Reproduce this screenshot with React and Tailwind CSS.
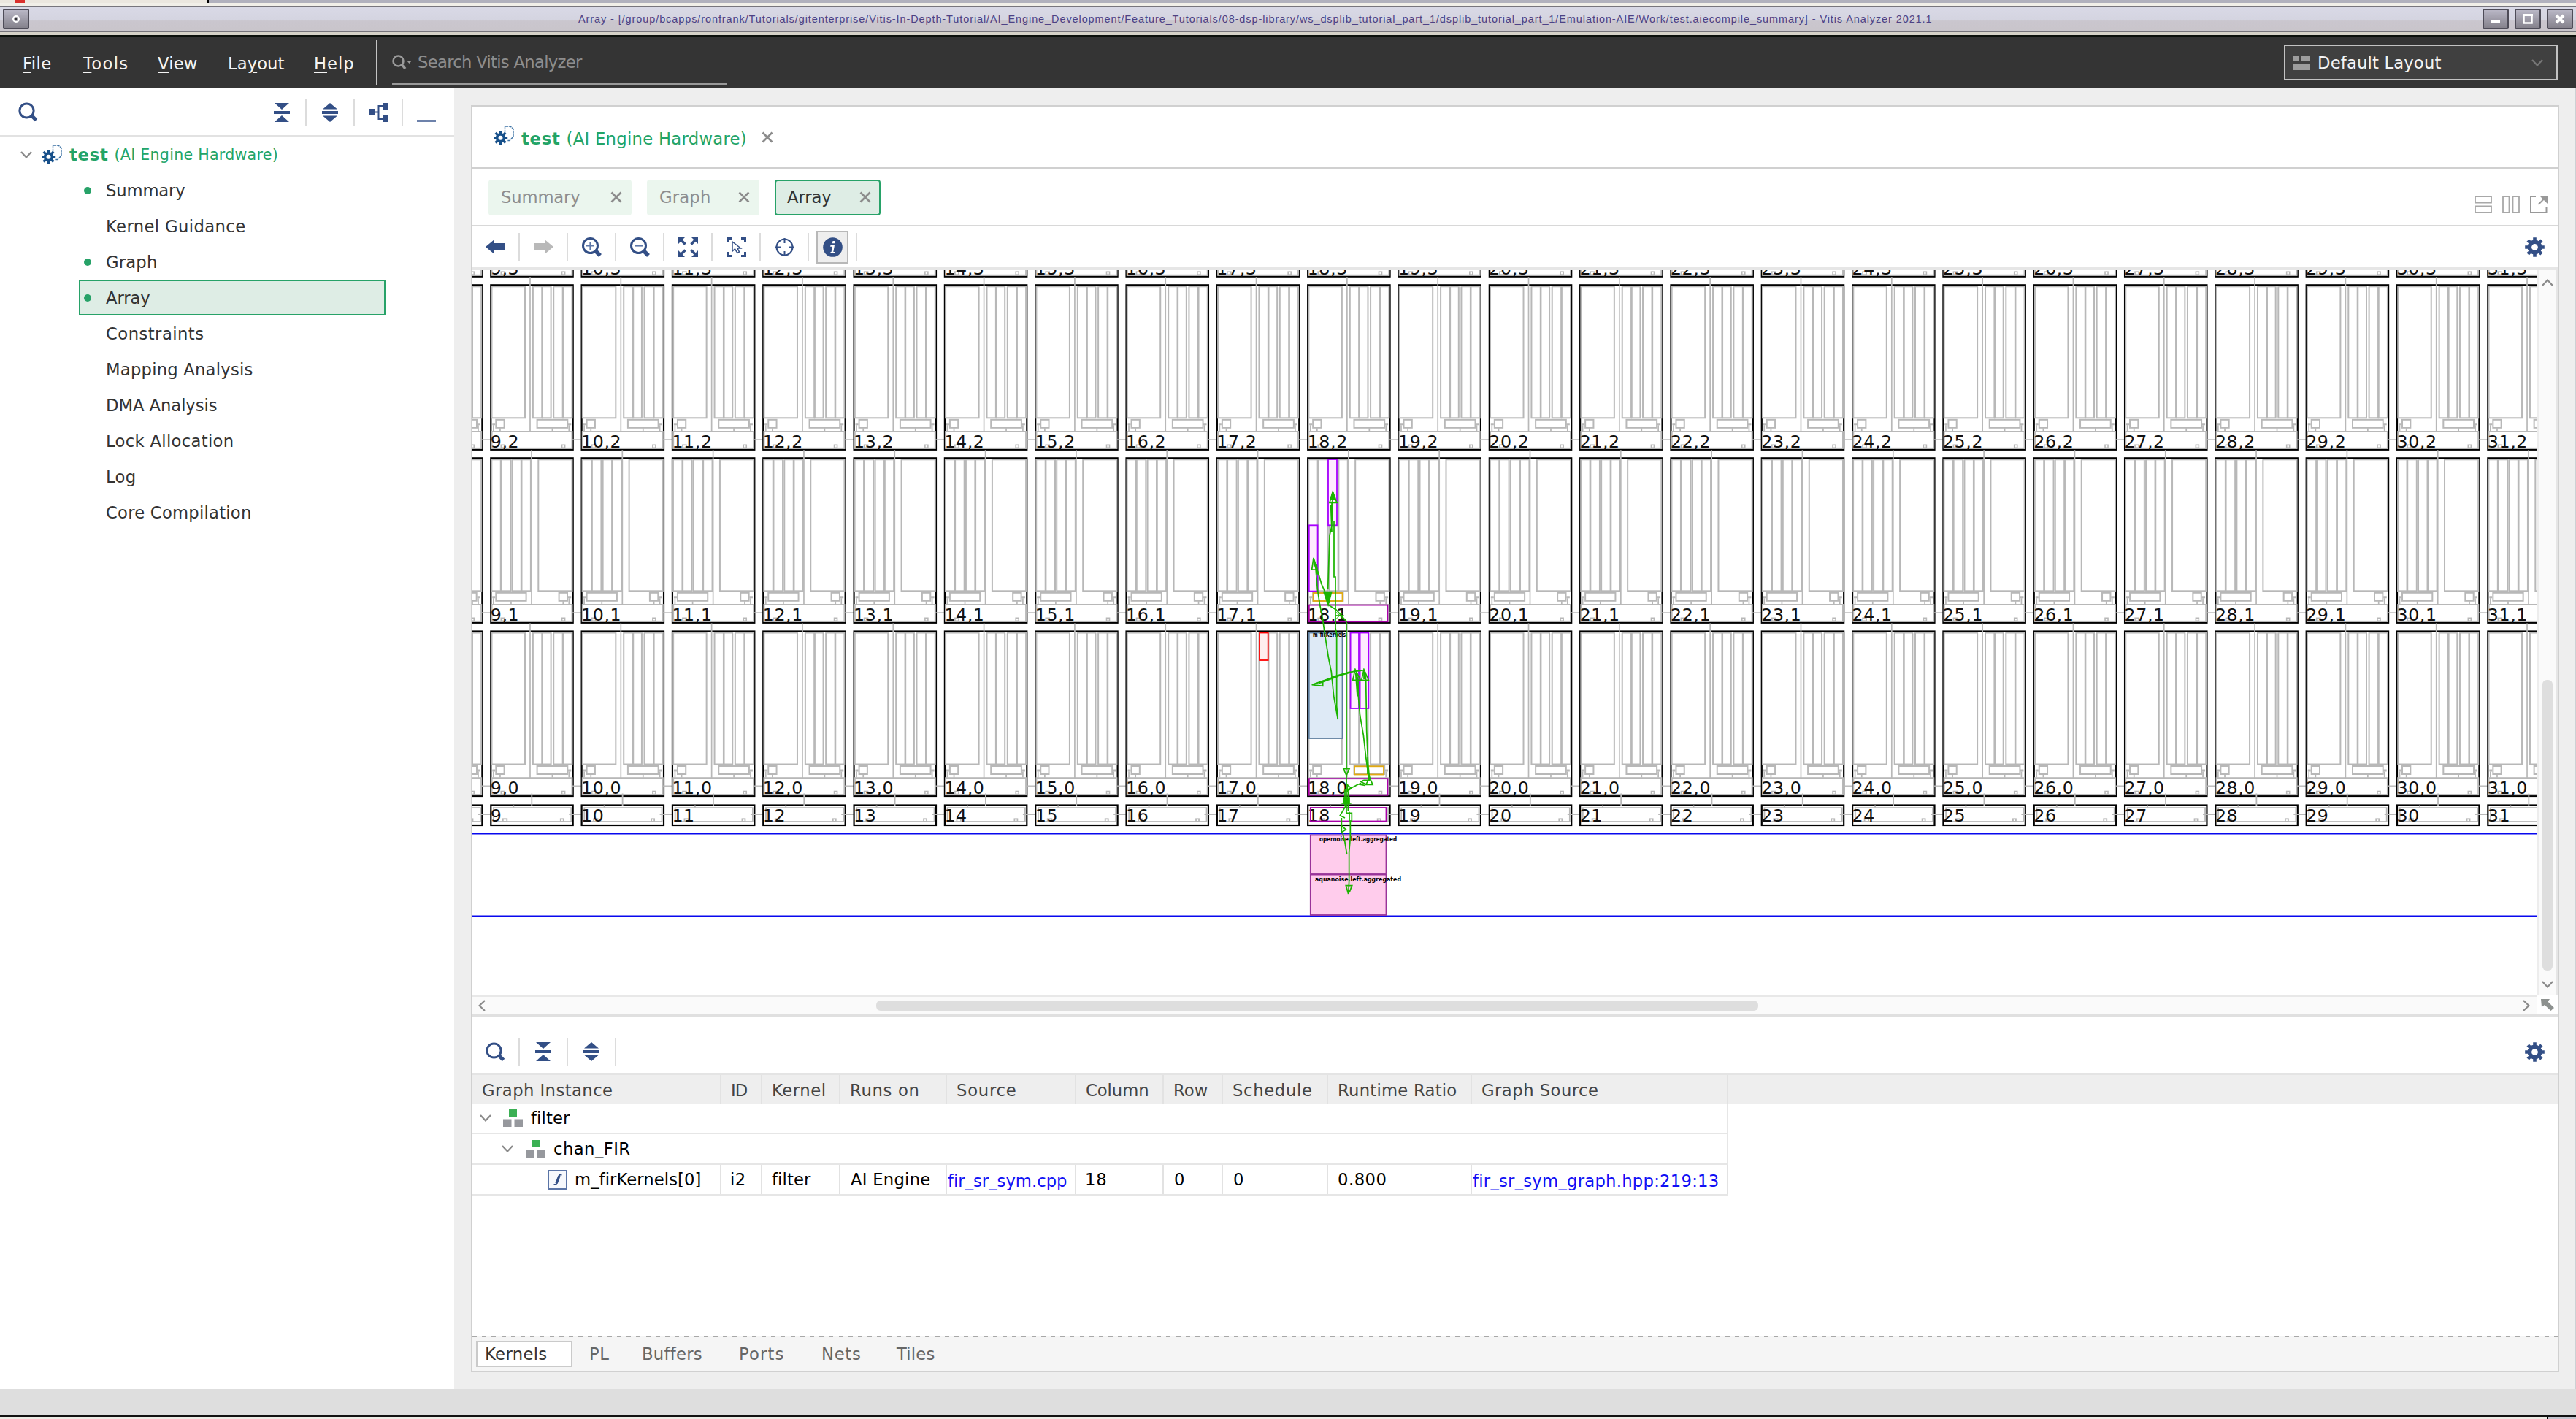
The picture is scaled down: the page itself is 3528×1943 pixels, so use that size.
import React, { useLayoutEffect, useRef } from "react";

/* Single-line label; its tracking is set so that it spans w pixels. */
function T({ w, className = "", children }) {
  const ref = useRef(null);
  useLayoutEffect(() => {
    const el = ref.current;
    if (!w || !el) return;
    el.style.letterSpacing = "0px";
    const natural = el.getBoundingClientRect().width;
    el.style.letterSpacing = (w - 1.5 - natural) / el.textContent.length + "px";
  }, [w]);
  return (
    <span ref={ref} className={"inline-block justify-self-start whitespace-pre " + className}>
      {children}
    </span>
  );
}

const BLUE = "#334f86";

const Search = () => (
  <svg width="27" height="27" viewBox="0 0 27 27" fill="none" stroke={BLUE}>
    <circle cx="11.5" cy="11.5" r="9.6" strokeWidth="3" />
    <path d="M18.5 18.5 L24.5 24.5" strokeWidth="5" />
  </svg>
);
const Zoom = ({ plus }) => (
  <svg width="27" height="27" viewBox="0 0 27 27" fill="none" stroke={BLUE}>
    <circle cx="11.5" cy="11.5" r="10" strokeWidth="3" />
    <path d="M19 19 L25 25" strokeWidth="5.5" />
    <path d={plus ? "M6 11.5H17M11.5 6V17" : "M6 11.5H17"} strokeWidth="2.2" stroke="#5f78a8" />
  </svg>
);
const Collapse = () => (
  <svg width="22" height="26" viewBox="0 0 22 26" fill={BLUE}>
    <path d="M1 0H21L11 9ZM0 11H22V15H0ZM1 26H21L11 17Z" />
  </svg>
);
const Expand = () => (
  <svg width="22" height="26" viewBox="0 0 22 26" fill={BLUE}>
    <path d="M1 8.5H21L11 0ZM0 11H22V15H0ZM1 17.5H21L11 26Z" />
  </svg>
);
const Hierarchy = () => (
  <svg width="27" height="26" viewBox="0 0 27 26" fill={BLUE}>
    <path d="M0 8H8V17H0ZM19 0H27V9H19ZM19 17H27V26H19Z" />
    <path d="M8 12.5H13.5M19 4H13.5V22H19" fill="none" stroke={BLUE} strokeWidth="2" />
  </svg>
);
const Arrow = ({ color, flip }) => (
  <svg width="27" height="22" viewBox="0 0 27 22" fill={color} className={flip ? "-scale-x-100" : ""}>
    <path d="M0 11L12 1V6H26V16H12V21Z" />
  </svg>
);
const Fit = () => (
  <svg width="27" height="27" viewBox="0 0 27 27" fill={BLUE}>
    {[0, 90, 180, 270].map((r) => (
      <g key={r} transform={`rotate(${r} 13.5 13.5)`}>
        <path d="M0 0H9L0 9Z" />
        <path d="M3 3L9.5 9.5" stroke={BLUE} strokeWidth="3.6" />
      </g>
    ))}
  </svg>
);
const SelectArea = () => (
  <svg width="27" height="27" viewBox="0 0 27 27" fill="none" stroke={BLUE}>
    <path d="M1.5 7V1.5H7M20 1.5H25.5V7M25.5 20V25.5H20M7 25.5H1.5V20" strokeWidth="3" />
    <path d="M8 6V19L11.5 16L15 21.5L17.5 20L15 15H19.5Z" strokeWidth="1.5" />
  </svg>
);
const Target = () => (
  <svg width="27" height="27" viewBox="0 0 27 27" fill="none" stroke={BLUE}>
    <circle cx="13.5" cy="13.5" r="11" strokeWidth="2" />
    <path d="M13.5 1V8M13.5 19V26M1 13.5H8M19 13.5H26" strokeWidth="2" />
  </svg>
);
const Info = () => (
  <svg width="27" height="27" viewBox="0 0 27 27">
    <circle cx="13.5" cy="13.5" r="13.3" fill={BLUE} />
    <path d="M13.5 5H17L16.4 8.2H12.9ZM10.5 10.8H16L14.3 20H16.2L15.8 22H10.2L10.6 20H11.6L12.9 12.8H10.1Z" fill="#fff" />
  </svg>
);
const Gear = ({ size = 27, color = BLUE }) => (
  <svg width={size} height={size} viewBox="0 0 27 27" fill="none">
    {[0, 45, 90, 135].map((r) => (
      <path key={r} d="M13.5 0.2V5M13.5 22V26.8" stroke={color} strokeWidth="4.6" transform={`rotate(${r} 13.5 13.5)`} />
    ))}
    <circle cx="13.5" cy="13.5" r="7.2" stroke={color} strokeWidth="5.6" />
  </svg>
);
const EngineIcon = () => (
  <svg width="28" height="27" viewBox="-1 0 28 27" fill="none">
    <path d="M14.500 10V1H22L26 4.5V15L21 20.5H18" stroke="#3f74a6" strokeWidth="1.400" strokeDasharray="4 0.800" />
    {[0, 45, 90, 135].map((r) => (
      <path key={r} d="M8.5 7V26.400" stroke="#17508a" strokeWidth="3.400" transform={`rotate(${r} 8.5 16.7)`} />
    ))}
    <circle cx="8.5" cy="16.7" r="4.900" fill="#fff" stroke="#17508a" strokeWidth="3.800" />
  </svg>
);
const Close = ({ s = 16 }) => (
  <svg width={s} height={s} viewBox="0 0 16 16" stroke="#8c8c8c" strokeWidth="2.6">
    <path d="M1.5 1.5L14.5 14.5M14.5 1.5L1.5 14.5" />
  </svg>
);
const Chevron = ({ className = "", color = "#8a8a8a" }) => (
  <svg width="16" height="10" viewBox="0 0 16 10" fill="none" stroke={color} strokeWidth="2.2" className={className}>
    <path d="M1 1L8 8.5L15 1" />
  </svg>
);
const GraphIcon = () => (
  <svg width="27" height="24" viewBox="0 0 27 24">
    <path d="M8 0H19V10H8Z" fill="#3bb054" />
    <path d="M0 13.5H11.5V24H0ZM15.5 13.5H27V24H15.5Z" fill="#96989d" />
  </svg>
);
const KernelIcon = () => (
  <svg width="27" height="27" viewBox="0 0 27 27" fill="none">
    <rect x="1" y="1" width="25" height="25" fill="#f6f8fc" stroke="#5a74a6" strokeWidth="2" />
    <path d="M19.500 6.500H16.500L11.500 20H8.500" stroke={BLUE} strokeWidth="1.800" />
    <path d="M16 8L12 18.500" stroke={BLUE} strokeWidth="3.400" />
  </svg>
);

/* ---------- title and menu bars ---------- */

const WinButton = ({ children }) => (
  <div className="flex h-7 w-9 items-center justify-center rounded-xs border-2 border-[#4e4c58] bg-linear-to-b from-[#b9b7c6] to-[#85828c]">
    {children}
  </div>
);

const TITLE =
  "Array - [/group/bcapps/ronfrank/Tutorials/gitenterprise/Vitis-In-Depth-Tutorial/AI_Engine_Development/Feature_Tutorials/08-dsp-library/ws_dsplib_tutorial_part_1/dsplib_tutorial_part_1/Emulation-AIE/Work/test.aiecompile_summary] - Vitis Analyzer 2021.1";

function TitleBar() {
  return (
    <header className="flex h-[50px] flex-col">
      <div className="flex h-1">
        <div className="h-1 w-[20px] bg-[#ebe7df]" />
        <div className="h-1 w-[14px] bg-[#d9302c]" />
        <div className="h-1 w-[250px] bg-[#ebe7df]" />
        <div className="h-1 w-[2px] bg-black" />
        <div className="h-1 flex-1 bg-[#b1b1bd]" />
      </div>
      <div className="h-1 bg-[#f1efe8]" />
      <div className="grid h-9 grid-cols-[788px_1fr_auto] items-center border-y-2 border-[#77757c] bg-[linear-gradient(#d9d9e6_0%,#d4d4e0_56%,#cac6ce_58%,#c9c5cb_100%)] pr-1 pl-1">
        <WinButton>
          <svg width="14" height="14" viewBox="0 0 14 14" fill="none" stroke="#fff" strokeWidth="2">
            <circle cx="7" cy="7" r="4" />
            <path d="M7 6V8" stroke="#333" />
          </svg>
        </WinButton>
        <T w={1856} className="font-[Liberation_Sans] text-[14.500px] leading-5 text-[#4d4285]">{TITLE}</T>
        <div className="flex gap-2">
          <WinButton>
            <svg width="16" height="14" viewBox="0 0 16 14"><path d="M2 9H14V13H2Z" fill="#fff" /></svg>
          </WinButton>
          <WinButton>
            <svg width="14" height="14" viewBox="0 0 14 14" fill="none"><path d="M1.500 1.500H12.500V12.500H1.500Z" stroke="#fff" strokeWidth="2.500" /><path d="M0 1.500H14" stroke="#fff" strokeWidth="3" /></svg>
          </WinButton>
          <WinButton>
            <svg width="14" height="14" viewBox="0 0 14 14"><path d="M2 2L12 12M12 2L2 12" stroke="#fff" strokeWidth="4" /></svg>
          </WinButton>
        </div>
      </div>
      <div className="h-1 bg-[#d6d2c8]" />
      <div className="h-[2px] bg-[#0c110c]" />
    </header>
  );
}

const Menu = ({ w, k, a = "", b }) => (
  <T w={w}>
    {a}
    <span className="underline decoration-2 underline-offset-[3px]">{k}</span>
    {b}
  </T>
);

function MenuBar() {
  return (
    <nav className="flex h-[71px] items-center bg-[#343434] text-[22.700px] leading-7 text-[#f4f4f4]">
      <div className="grid w-[515px] grid-cols-[83px_102px_96px_118px_85px] pt-[2px] pl-[31px]">
        <Menu w={41} k="F" b="ile" />
        <Menu w={64} k="T" b="ools" />
        <Menu w={56} k="V" b="iew" />
        <Menu w={79} a="La" k="y" b="out" />
        <Menu w={57} k="H" b="elp" />
      </div>
      <div className="h-[61px] w-[2px] bg-[#c4c4c4]" />
      <div className="mt-[5px] ml-5 flex h-[56px] w-[458px] items-center border-b-3 border-[#999] pb-[3px] text-[#8d8d8d]">
        <svg width="27" height="20" viewBox="0 0 27 20" fill="none" stroke="#9a9a9a" strokeWidth="2.600">
          <circle cx="8.500" cy="8.500" r="7" />
          <path d="M13 13L18 19" strokeWidth="3.500" />
          <path d="M20 8H27L23.500 12Z" fill="#9a9a9a" stroke="none" />
        </svg>
        <T w={226} className="ml-2">Search Vitis Analyzer</T>
      </div>
      <div className="mr-[25px] ml-auto flex h-[49px] w-[375px] items-center border-2 border-[#c2c2c2] bg-[#404040] pr-[18px] pl-[11px]">
        <svg width="23" height="20" viewBox="0 0 23 20" fill="#9d9d9d">
          <path d="M0 0H8V8H0ZM10 0H23V8H10ZM0 12H23V20H0Z" />
        </svg>
        <T w={171} className="ml-[10px]">Default Layout</T>
        <Chevron className="ml-auto" color="#777" />
      </div>
    </nav>
  );
}

/* ---------- navigation panel ---------- */

const NAV = [
  { t: "Summary", w: 110, dot: true },
  { t: "Kernel Guidance", w: 193 },
  { t: "Graph", w: 72, dot: true },
  { t: "Array", w: 62, dot: true, on: true },
  { t: "Constraints", w: 136 },
  { t: "Mapping Analysis", w: 203 },
  { t: "DMA Analysis", w: 154 },
  { t: "Lock Allocation", w: 177 },
  { t: "Log", w: 43 },
  { t: "Core Compilation", w: 201 },
];

function Sidebar() {
  return (
    <aside className="h-[1781px] w-[622px] bg-white">
      <div className="flex h-[66px] items-center border-b-2 border-[#e2e2e2] pt-[1px] pl-[25px]">
        <Search />
        <div className="ml-[302px] flex items-center">
          {[<Collapse key="c" />, <Expand key="e" />, <Hierarchy key="h" />].map((icon, i) => (
            <div key={i} className="flex h-[38px] w-[66px] items-center justify-center border-r-2 border-[#dcdcdc]">{icon}</div>
          ))}
          <div className="mt-[24px] ml-[19px] h-[3px] w-[26px] bg-[#6d82ab]" />
        </div>
      </div>
      <div className="flex h-[49px] items-center pl-7 text-[#23a467]">
        <Chevron />
        <div className="ml-[13px]"><EngineIcon /></div>
        <T w={55} className="ml-[10px] text-[22.700px] leading-7 font-bold">test</T>
        <T w={226} className="ml-2 text-[20.600px] leading-7">(AI Engine Hardware)</T>
      </div>
      {NAV.map((n) => (
        <div
          key={n.t}
          className={
            "ml-[108px] flex h-[49px] w-[420px] items-center border-2 pl-[5px] text-[22.700px] leading-7 text-[#333] " +
            (n.on ? "border-[#27a268] bg-[#deede5]" : "border-transparent")
          }
        >
          <div className={"size-[10px] rounded-full " + (n.dot ? "bg-[#27a268]" : "")} />
          <T w={n.w} className="ml-5">{n.t}</T>
        </div>
      ))}
    </aside>
  );
}

/* ---------- device array ---------- */

const PITCH = 124.32;
const X0 = 672.3 - PITCH;
const ROW_TOP = { 3: 153.2, 2: 390.3, 1: 627.3, 0: 864.5 };
const COLS = Array.from({ length: 24 }, (_, i) => i + 8);

function Box({ x1, x2, y1, y2, ...p }) {
  return <rect x={x1} y={y1} width={x2 - x1} height={y2 - y1} {...p} />;
}

function Tile({ col, row }) {
  const odd = row % 2 === 1;
  const bars = odd
    ? [[1, 13.500], [14.200, 26.800], [29, 41.500], [42.200, 54.600]]
    : [[57.600, 70], [70.600, 82.300], [85.900, 98.400], [99, 111.200]];
  const main = odd ? [65, 111.200] : [1.200, 46.700];
  const wide = odd ? [7, 48.300] : [63.300, 105];
  const small = odd ? [93.300, 104.700] : [7, 18.300];
  const vx = odd ? 55.700 : 53.700;
  const mid = (r) => (r[0] + r[1]) / 2;
  return (
    <g transform={`translate(${X0 + (col - 8) * PITCH} ${ROW_TOP[row]})`}>
      <rect width="112.400" height="225.500" fill="#fff" stroke="#000" strokeWidth="2.200" />
      <g fill="none" stroke="#b8b8b8" strokeWidth="2">
        {bars.map(([a, b]) => <Box key={a} x1={a} x2={b} y1={2} y2={182} />)}
        <Box x1={main[0]} x2={main[1]} y1={2} y2={182} />
        <Box x1={wide[0]} x2={wide[1]} y1={184.500} y2={195.500} />
        <Box x1={small[0]} x2={small[1]} y1={184.500} y2={195.500} />
        <Box x1={1.200} x2={111.200} y1={200.700} y2={223.600} />
        <path d={`M${vx} -11V200.700M${mid(wide)} 196V200M${mid(small)} 196V200M3.500 192V200M107 192V200`} strokeWidth="1.700" />
        <path d="M2 190.500H6M105.500 190.500H110" strokeWidth="3" />
        <Box x1={14} x2={19} y1={219} y2={223} strokeWidth="1.600" />
        <Box x1={97.300} x2={101.300} y1={219} y2={223} strokeWidth="1.600" />
        <path d="M111.400 211.700H125" strokeWidth="1.400" />
      </g>
      <text x="-0.500" y="222.500" fontSize="23.700" letterSpacing="0.600" fill="#111">{col + "," + row}</text>
    </g>
  );
}

function ShimTile({ col }) {
  return (
    <g transform={`translate(${X0 + (col - 8) * PITCH} 1102.500)`}>
      <rect width="112.400" height="27.500" fill="#fff" stroke="#000" strokeWidth="2.200" />
      <g fill="none" stroke="#b8b8b8" strokeWidth="1.800">
        <Box x1={3.700} x2={110} y1={3.600} y2={22.500} />
        <path d="M56 -16V1M31 0V3M107 12.500H129" />
        <Box x1={16.500} x2={22} y1={18.800} y2={22.500} />
        <Box x1={95.500} x2={99.500} y1={18.800} y2={22.500} />
      </g>
      <text x="-0.500" y="22.500" fontSize="23.700" letterSpacing="0.600" fill="#111">{col}</text>
    </g>
  );
}

function Routes() {
  return (
    <g transform="translate(1780 620) scale(0.33333)" fill="none" stroke="#1cb400" strokeWidth="5.200">
      <path d="M135 165V280M132 200V300L123 340L116 560M128 215L132 325" />
      <path d="M141 280V510H147V720L152 745V1040L157 1095" />
      <path d="M136 160L123 205H153Z" />
      <path d="M136 162L127 190H145Z" fill="#1cb400" />
      <path d="M57 432L50 480H72Z M60 455L75 490L90 540L112 590" />
      <path d="M57 440L66 475L73 560L82 620L94 680L104 750L118 840L130 900L140 1000L157 1095" />
      <path d="M57 460H68L73 500" strokeWidth="8" />
      <path d="M99 572H131L117 625Z" fill="#1cb400" />
      <path d="M117 625L150 645L185 685L192 692V1300" />
      <path d="M150 655L178 682M150 682L180 655M148 668H182" strokeWidth="3" />
      <path d="M50 953L95 938V958Z M50 953L130 925L200 905L232 895M130 922L200 902L265 893" />
      <path d="M80 945L155 918" strokeWidth="8" />
      <path d="M228 890L218 934H250Z M264 890L254 934H283Z" />
      <path d="M232 900L240 935L241 1000L248 1080L262 1160L272 1250L285 1345" />
      <path d="M232 905L239 1000M266 900V930" strokeWidth="9" />
      <path d="M268 900L272 935L275 1140L281 1280L288 1350M279 1250V1320" />
      <path d="M288 1335L272 1363H300Z" />
      <path d="M285 1345H262M240 1362L225 1370L196 1384M248 1350L275 1363M262 1345L244 1362L268 1366M196 1364L212 1378L196 1390Z" />
      <path d="M180 1298H204L192 1325Z" />
      <path d="M192 1325V1480M186 1380V1450M199 1390V1470" />
      <path d="M180 1416H204V1440H180Z" fill="#1cb400" />
      <path d="M172 1440H212M190 1450L166 1490L186 1500M172 1500V1560M170 1530L190 1548L174 1558" />
      <path d="M176 1560L186 1600L194 1650" />
      <path d="M190 1480H214V1512H204V1475M208 1512V1580L203 1640V1760L200 1812L190 1778H215L204 1806" />
    </g>
  );
}

function ArrayCanvas() {
  return (
    <svg width="2828" height="993" viewBox="647 370 2828 993" className="block bg-white" fontFamily="DejaVu Sans, sans-serif">
      {[3, 2, 1, 0].map((row) => COLS.map((c) => <Tile key={row + "-" + c} col={c} row={row} />))}
      {COLS.map((c) => <ShimTile key={c} col={c} />)}
      <path d="M647 1141.500H3475M647 1254.500H3475" stroke="#0808ee" strokeWidth="2.200" />
      <g strokeWidth="1.800">
        <g fill="#ffecff" stroke="#a800ff">
          <Box x1={1819} x2={1831} y1={629} y2={719.300} />
          <Box x1={1792.800} x2={1804.600} y1={719.300} y2={809.600} />
          <Box x1={1849.600} x2={1861} y1={866.500} y2={970} />
          <Box x1={1862.600} x2={1874.400} y1={866.500} y2={970} />
        </g>
        <Box x1={1725} x2={1736.700} y1={866.500} y2={904} fill="#ffeeee" stroke="#f00" />
        <Box x1={1792.800} x2={1838.500} y1={866.500} y2={1011} fill="#deeaf6" stroke="#5f7f9f" />
        <g fill="none" stroke="#e2aa10">
          <Box x1={1798.600} x2={1838.500} y1={812} y2={823} />
          <Box x1={1855} x2={1895} y1={1049.300} y2={1060.500} />
        </g>
        <g fill="none" stroke="#a800a8">
          <Box x1={1792.800} x2={1900.500} y1={828.600} y2={851.300} />
          <Box x1={1792.800} x2={1900.500} y1={1066.200} y2={1088.700} />
          <Box x1={1794.800} x2={1898.500} y1={1106} y2={1124.500} />
        </g>
        <g fill="#ffccec" stroke="#993399">
          <Box x1={1794.800} x2={1898.500} y1={1143.500} y2={1196} />
          <Box x1={1794.800} x2={1898.500} y1={1197.600} y2={1253} />
        </g>
      </g>
      <g fontSize="8" fontWeight="bold" fill="#000">
        <text x="1798" y="872" textLength="45" lengthAdjust="spacingAndGlyphs">m_firKernels</text>
        <text x="1807" y="1151.500" textLength="106" lengthAdjust="spacingAndGlyphs">opernoise.left.aggregated</text>
        <text x="1801" y="1206.500" textLength="118" lengthAdjust="spacingAndGlyphs">aquanoise.left.aggregated</text>
      </g>
      <Routes />
    </svg>
  );
}

/* ---------- main area ---------- */

const Chip = ({ w, on, className, children }) => (
  <div
    className={
      "flex h-[49px] items-center justify-between rounded-sm border-2 pr-[11px] pl-[15px] " +
      (on ? "border-[#27a268] bg-[#deede5] text-[#333] " : "border-[#ebf6ee] bg-[#ebf6ee] text-[#8e8e8e] ") +
      className
    }
  >
    <T w={w}>{children}</T>
    <Close />
  </div>
);

const LayoutIcons = () => (
  <div className="flex gap-[14px] text-[#a2a2a2]">
    <svg width="24" height="24" viewBox="0 0 24 24" fill="none" stroke="#a8a8a8" strokeWidth="1.800">
      <path d="M1 1H23V9.500H1ZM1 14.500H23V23H1Z" />
    </svg>
    <svg width="24" height="24" viewBox="0 0 24 24" fill="none" stroke="#a8a8a8" strokeWidth="1.800">
      <path d="M1 1H9.500V23H1ZM14.500 1H23V23H14.500Z" />
    </svg>
    <svg width="24" height="24" viewBox="0 0 24 24" fill="none" stroke="#999" strokeWidth="2">
      <path d="M8 1H1V23H22.500V16M11.500 12L19 4.500" />
      <path d="M13 0H24V11Z" fill="#999" stroke="none" />
    </svg>
  </div>
);

function EditorHead() {
  return (
    <>
      <div className="flex h-[85px] items-center border-b-2 border-[#d0d0d0] pt-1 pl-[29px] text-[22.700px] leading-7 text-[#23a467]">
        <div className="-mt-[8px]"><EngineIcon /></div>
        <T w={55} className="ml-[10px] font-bold">test</T>
        <T w={249} className="ml-[8px]">(AI Engine Hardware)</T>
        <div className="-mt-[4px] ml-[20px]"><Close /></div>
      </div>
      <div className="flex h-[79px] items-center border-b-2 border-[#d8d8d8] pt-[1px] pl-[22px] text-[22.700px] leading-7">
        <Chip w={110} className="w-[196px]">Summary</Chip>
        <Chip w={72} className="ml-[21px] w-[154px]">Graph</Chip>
        <Chip w={62} on className="ml-[21px] w-[145px]">Array</Chip>
        <div className="mt-[19px] mr-[14px] ml-auto"><LayoutIcons /></div>
      </div>
      <div className="flex h-[60px] items-center border-b-4 border-[#e6e6e6] pr-[18px]">
        <div className="flex h-[38px] w-[65px] items-center justify-center border-r-2 border-[#dcdcdc]"><Arrow color={BLUE} /></div>
        {[<Arrow key="f" color="#b9b9b9" flip />, <Zoom key="i" plus />, <Zoom key="o" />, <Fit key="t" />, <SelectArea key="s" />, <Target key="g" />].map((icon, i) => (
          <div key={i} className="flex h-[38px] w-[66px] items-center justify-center border-r-2 border-[#dcdcdc]">{icon}</div>
        ))}
        <div className="flex h-[38px] w-[66px] items-center justify-center border-r-2 border-[#dcdcdc]">
          <div className="flex h-[45px] w-11 shrink-0 items-center justify-center border-2 border-[#b8b8b8] bg-[#eee]"><Info /></div>
        </div>
        <div className="ml-auto"><Gear /></div>
      </div>
    </>
  );
}

function Canvas() {
  return (
    <div className="grid grid-cols-[2828px_28px] grid-rows-[993px_29px]">
      <ArrayCanvas />
      <div className="flex flex-col items-center border-r-2 border-l-2 border-r-[#e6e6e6] border-l-[#ededed] bg-[#fafafa] pt-3 pb-[10px]">
        <Chevron className="rotate-180" />
        <div className="mt-auto mb-[14px] h-[398px] w-[14px] rounded-md bg-[#dedede]" />
        <Chevron />
      </div>
      <div className="flex items-center border-t-2 border-b-3 border-t-[#e8e8e8] border-b-[#e0e0e0] bg-[#fafafa] pr-[7px] pl-[5px]">
        <Chevron className="rotate-90" />
        <div className="ml-[532px] h-[14px] w-[1208px] rounded-md bg-[#dedede]" />
        <Chevron className="ml-auto -rotate-90" />
      </div>
      <div className="flex items-center border-b-3 border-[#e0e0e0] pl-[5px]">
        <svg width="18" height="17" viewBox="0 0 18 17" fill="#8d918f">
          <path d="M0 0H12L9.500 3.500L18 12L13.500 16L5 8L1 11Z" />
        </svg>
      </div>
    </div>
  );
}

const Cell = ({ className = "", children }) => (
  <div className={"flex items-center border-r-2 border-[#e2e2e2] pl-[14px] " + className}>{children}</div>
);

const GRID = "grid w-[1720px] grid-cols-[341px_56px_107px_146px_177px_120px_81px_144px_197px_351px] ";
const HEAD = [
  ["Graph Instance", 181], ["ID", 24], ["Kernel", 76], ["Runs on", 97], ["Source", 84],
  ["Column", 88], ["Row", 49], ["Schedule", 111], ["Runtime Ratio", 165], ["Graph Source", 162],
];

function KernelTable() {
  return (
    <div className="h-[357px] text-[22.700px] leading-7 text-black">
      <div className="h-10 bg-[#eee] text-[#444]">
        <div className={GRID + "h-10"}>
          {HEAD.map(([t, w]) => (
            <Cell key={t} className="pt-[1px] !pl-[13px]"><T w={w}>{t}</T></Cell>
          ))}
        </div>
      </div>
      <div className="flex h-[41px] w-[1720px] items-center border-r-2 border-b-2 border-[#e6e6e6] pb-[1px] pl-[10px]">
        <Chevron />
        <div className="ml-4"><GraphIcon /></div>
        <T w={55} className="ml-[11px]">filter</T>
      </div>
      <div className="flex h-[42px] w-[1720px] items-center border-r-2 border-b-2 border-[#e6e6e6] pb-[1px] pl-10">
        <Chevron />
        <div className="ml-[17px]"><GraphIcon /></div>
        <T w={107} className="ml-[11px]">chan_FIR</T>
      </div>
      <div className={GRID + "h-[42px] border-b-2 border-[#e6e6e6]"}>
        <Cell className="!pl-[103px]"><KernelIcon /><T w={175} className="ml-[10px]">m_firKernels[0]</T></Cell>
        <Cell className="!pl-[12px]"><T w={23}>i2</T></Cell>
        <Cell className="!pl-[13px]"><T w={55}>filter</T></Cell>
        <Cell><T w={111}>AI Engine</T></Cell>
        <Cell className="!pl-[1px] pt-[3px] text-[#1010f5]"><T w={165}>fir_sr_sym.cpp</T></Cell>
        <Cell className="!pl-[12px]"><T w={32}>18</T></Cell>
        <Cell><T w={15}>0</T></Cell>
        <Cell><T w={15}>0</T></Cell>
        <Cell className="!pl-[13px]"><T w={69}>0.800</T></Cell>
        <Cell className="!pl-[1px] pt-[3px] text-[#1010f5]"><T w={339}>fir_sr_sym_graph.hpp:219:13</T></Cell>
      </div>
    </div>
  );
}

function LowerPane() {
  return (
    <>
      <div className="flex h-20 items-center border-b-3 border-[#e4e4e4] pt-[19px] pr-[18px]">
        <div className="flex h-[38px] w-[65px] items-center justify-center border-r-2 border-[#dcdcdc]"><Search /></div>
        <div className="flex h-[38px] w-[66px] items-center justify-center border-r-2 border-[#dcdcdc]"><Collapse /></div>
        <div className="flex h-[38px] w-[66px] items-center justify-center border-r-2 border-[#dcdcdc]"><Expand /></div>
        <div className="ml-auto"><Gear /></div>
      </div>
      <KernelTable />
      <div className="h-[2px] bg-[repeating-linear-gradient(90deg,#a8a8a8_0_6px,#f5f5f5_6px_13.200px)]" />
      <div className="flex h-[46px] items-center bg-[#f5f5f5] pl-[5px] text-[22.700px] leading-7 text-[#666]">
        <div className="flex h-9 w-[132px] items-center border-2 border-[#cacaca] bg-white pl-[10px] text-[#333]"><T w={87}>Kernels</T></div>
        <div className="grid grid-cols-[72px_133px_112px_104px_80px] pl-[23px]">
          <T w={29}>PL</T>
          <T w={84}>Buffers</T>
          <T w={64}>Ports</T>
          <T w={56} className="ml-[1px]">Nets</T>
          <T w={54}>Tiles</T>
        </div>
      </div>
    </>
  );
}

export default function App() {
  return (
    <div className="h-[1943px] w-[3528px] overflow-hidden bg-[#eee] font-['DejaVu_Sans',sans-serif]">
      <TitleBar />
      <MenuBar />
      <div className="flex h-[1781px] border-r border-[#cdd0d4]">
        <Sidebar />
        <main className="mt-[23px] ml-[23px] h-[1735px] w-[2860px] border-2 border-[#d0d0d0] bg-white">
          <EditorHead />
          <Canvas />
          <LowerPane />
        </main>
      </div>
      <footer className="h-9 bg-[#dedede]" />
      <div className="h-[2px] bg-[#111]" />
      <div className="flex h-[3px]">
        <div className="flex-1 bg-[#eceae4]" />
        <div className="w-[2px] bg-black" />
        <div className="w-[38px] bg-[#c4c4ce]" />
      </div>
    </div>
  );
}
